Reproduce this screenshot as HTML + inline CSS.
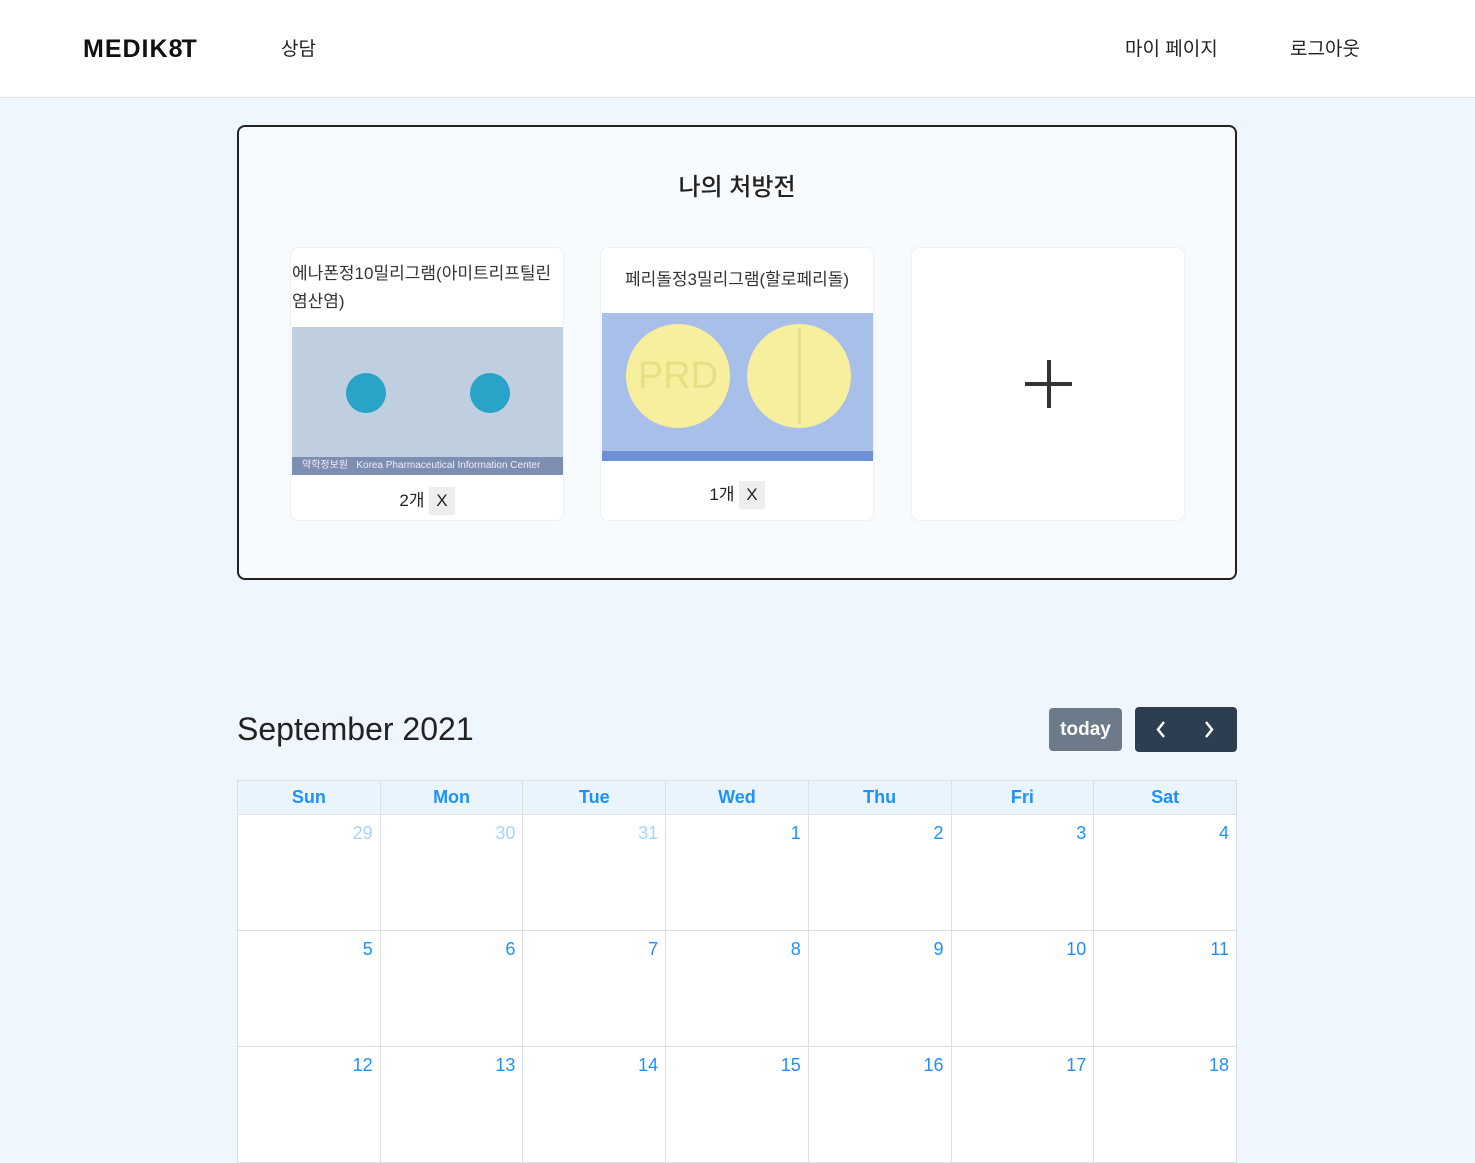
<!DOCTYPE html>
<html><head><meta charset="utf-8"><style>
*{box-sizing:border-box;margin:0;padding:0}
body{width:1475px;height:1080px;overflow:hidden;background:#f0f6fd;font-family:"Liberation Sans","Noto Sans CJK KR",sans-serif;color:#222}
.hdr{position:absolute;left:0;top:0;width:1475px;height:98px;background:#fff;border-bottom:1px solid #e3e6ea}
.hdr .logo{position:absolute;left:83px;top:35px;font-size:25px;font-weight:bold;letter-spacing:1px;color:#111}
.hdr a{position:absolute;top:34px;font-size:19px;color:#222}
.box{position:absolute;left:237px;top:125px;width:1000px;height:455px;border:2px solid #222;border-radius:8px;background:#f8fbfe}
.box h2{position:absolute;top:40px;width:100%;text-align:center;font-size:24px;font-weight:500;color:#222}
.card{position:absolute;top:120px;width:274px;height:274px;background:#fff;border:1px solid #eef0f2;border-radius:8px;overflow:hidden}
.card .t{font-size:17px;color:#333;line-height:28px}
.cnt{position:absolute;left:0;width:100%;text-align:center;font-size:17px}
.cnt span{display:inline-block;background:#eee;padding:0 7px;line-height:28px}
.cal-title{position:absolute;left:237px;top:711px;font-size:32px;color:#222}
.today{position:absolute;left:1049px;top:708px;width:73px;height:43px;background:#6c7a89;border-radius:4px;color:#fff;font-size:19px;font-weight:bold;text-align:center;line-height:43px}
.nav{position:absolute;left:1135px;top:707px;width:102px;height:45px;background:#2c3e50;border-radius:4px}
table{position:absolute;left:237px;top:780px;width:1000px;border-collapse:collapse;table-layout:fixed}
th{height:34px;border:1px solid #dcdfe3;background:#eaf4fd;color:#1e90ff;font-size:18px;font-weight:bold}
td{height:116px;border:1px solid #dcdfe3;background:#fff;vertical-align:top;text-align:right;padding:8px 7px;color:#1e90ff;font-size:18px}
td.o{color:#a9d2f7}
</style></head><body>
<div class="hdr"><div class="logo">MEDIK<span style="letter-spacing:-1px">8</span>T</div>
<a style="left:281px">상담</a><a style="left:1125px">마이 페이지</a><a style="left:1290px">로그아웃</a></div>
<div class="box"><h2>나의 처방전</h2>
<div class="card" style="left:51px"><div class="t" style="padding:12px 1px 0">에나폰정10밀리그램(아미트리프틸린<br>염산염)</div>
<div style="position:absolute;left:1px;top:79px;width:271px;height:148px;background:#bfcfe0">
<div style="position:absolute;left:54px;top:46px;width:40px;height:40px;border-radius:50%;background:#2aa3c8"></div>
<div style="position:absolute;left:178px;top:46px;width:40px;height:40px;border-radius:50%;background:#2aa3c8"></div>
<div style="position:absolute;left:0;bottom:0;width:100%;height:18px;background:#7d8eb0;color:#eef;font-size:10px;line-height:18px;padding-left:10px">약학정보원 &nbsp; Korea Pharmaceutical Information Center</div></div>
<div class="cnt" style="top:238px">2개 <span>X</span></div></div>
<div class="card" style="left:361px"><div class="t" style="text-align:center;padding-top:18px">페리돌정3밀리그램(할로페리돌)</div>
<div style="position:absolute;left:1px;top:65px;width:271px;height:148px;background:#a7bfe9">
<div style="position:absolute;left:24px;top:11px;width:104px;height:104px;border-radius:50%;background:#f6ef9e;color:#e8df85;font-size:38px;line-height:104px;text-align:center">PRD</div>
<div style="position:absolute;left:145px;top:11px;width:104px;height:104px;border-radius:50%;background:#f6ef9e"><div style="position:absolute;left:51px;top:4px;width:3px;height:96px;background:#e8df85"></div></div>
<div style="position:absolute;left:0;bottom:0;width:100%;height:10px;background:#6d8fd6"></div></div>
<div class="cnt" style="top:232px">1개 <span>X</span></div></div>
<div class="card" style="left:672px"><div style="position:absolute;left:113px;top:134px;width:47px;height:4px;background:#333"></div><div style="position:absolute;left:135px;top:112px;width:4px;height:48px;background:#333"></div></div>
</div>
<div class="cal-title">September 2021</div>
<div class="today">today</div>
<div class="nav"><svg width="102" height="45"><path d="M29 15l-6 7.5 6 7.5M71 15l6 7.5-6 7.5" stroke="#fff" stroke-width="2.5" fill="none"/></svg></div>
<table><tr><th>Sun</th><th>Mon</th><th>Tue</th><th>Wed</th><th>Thu</th><th>Fri</th><th>Sat</th></tr>
<tr><td class="o">29</td><td class="o">30</td><td class="o">31</td><td>1</td><td>2</td><td>3</td><td>4</td></tr>
<tr><td>5</td><td>6</td><td>7</td><td>8</td><td>9</td><td>10</td><td>11</td></tr>
<tr><td>12</td><td>13</td><td>14</td><td>15</td><td>16</td><td>17</td><td>18</td></tr></table>
</body></html>
